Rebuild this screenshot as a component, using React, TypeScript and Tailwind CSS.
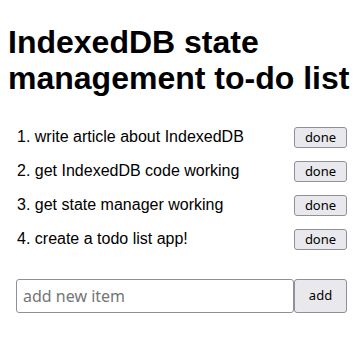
import React from 'react';

const items = [
  'write article about IndexedDB',
  'get IndexedDB code working',
  'get state manager working',
  'create a todo list app!',
];

export default function App() {
  return (
    <div className="w-[363px] h-[347px] bg-white px-2 pt-[24px] font-['Liberation_Sans',Arial,sans-serif] text-black">
      <h1 className="text-[32px] font-bold leading-[36px]">
        IndexedDB state management to-do list
      </h1>

      <ol className="mt-[24px] px-2">
        {items.map((item, i) => (
          <li key={i} className="flex h-[34px] items-center justify-between">
            <span className="pl-px text-[16px]">
              {i + 1}. {item}
            </span>
            <button className="h-[21px] w-[53px] rounded-[3px] border border-[#8f8f9d] bg-[#e9e9ed] font-['Noto_Sans',sans-serif] text-[13px] leading-none">
              done
            </button>
          </li>
        ))}
      </ol>

      <form className="mx-2 mt-[23px] flex h-[34px]">
        <input
          placeholder="add new item"
          className="min-w-0 flex-1 rounded-[3px] border border-[#8f8f9d] px-[6px] font-['Noto_Sans',sans-serif] text-[16px] placeholder:text-[#757575] outline-none"
        />
        <button
          type="button"
          className="w-[53px] rounded-[3px] border border-[#8f8f9d] bg-[#e9e9ed] font-['Noto_Sans',sans-serif] text-[13px]"
        >
          add
        </button>
      </form>
    </div>
  );
}
